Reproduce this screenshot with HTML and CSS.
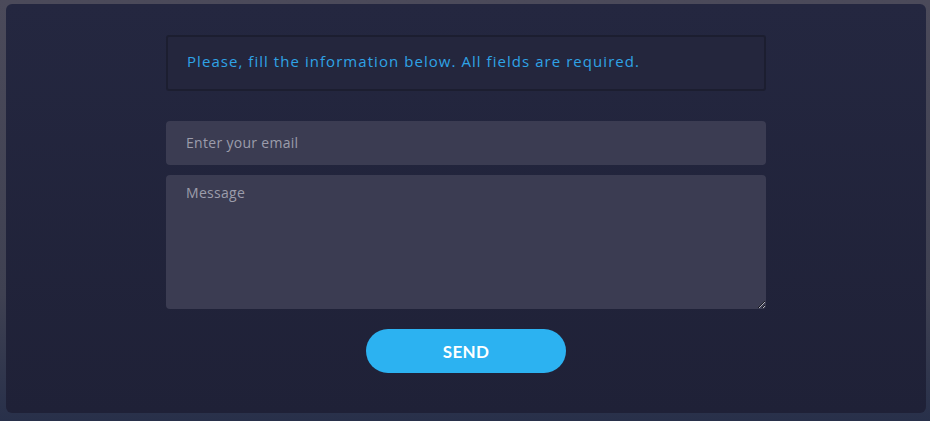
FILE: index.html
```html
<!DOCTYPE html>
<html>
<head>
<meta charset="utf-8">
<link rel="stylesheet" href="styles.css">
</head>
<body>
<div class="card">
  <form class="form">
    <div class="notice">Please, fill the information below. All fields are required.</div>
    <input class="field" type="text" placeholder="Enter your email">
    <textarea class="field area" placeholder="Message"></textarea>
    <button class="send" type="button">SEND</button>
  </form>
</div>
</body>
</html>
```
FILE: styles.css
```css
html, body {
  margin: 0;
  padding: 0;
  height: 421px;
  overflow: hidden;
}
body {
  background: linear-gradient(180deg, #4b4a5a 0%, #3f4152 70%, #28304a 100%);
  font-family: "Open Sans", "Lato", sans-serif;
  padding: 4px 4px 8px 6px;
  box-sizing: border-box;
}
.card {
  height: 409px;
  background: linear-gradient(180deg, #242740 0%, #1f2137 100%);
  border-radius: 6px;
  display: flex;
  justify-content: center;
  padding-top: 31px;
  box-sizing: border-box;
}
.form {
  width: 600px;
  display: flex;
  flex-direction: column;
  align-items: center;
}
.notice {
  box-sizing: border-box;
  width: 600px;
  height: 56px;
  border: 2px solid #1c1e30;
  border-radius: 3px;
  background: #24263d;
  color: #2fa3e6;
  font-size: 15px;
  letter-spacing: 1.05px;
  padding: 0 0 4px 19px;
  display: flex;
  align-items: center;
  margin-bottom: 30px;
}
.field {
  box-sizing: border-box;
  width: 600px;
  height: 44px;
  border: none;
  border-radius: 4px;
  background: #3b3c52;
  color: #d0d0da;
  font-family: inherit;
  font-size: 14px;
  letter-spacing: 0.3px;
  padding: 0 20px 2px;
  margin: 0 0 10px 0;
  outline: none;
}
.field::placeholder {
  color: #9c9cab;
}
.area {
  height: 134px;
  padding-top: 8px;
  resize: vertical;
  display: block;
}
.send {
  margin-top: 10px;
  width: 200px;
  height: 44px;
  border: none;
  border-radius: 22px;
  background: #2cb2f1;
  color: #ffffff;
  font-family: "Lato", sans-serif;
  font-weight: 700;
  font-size: 17px;
  letter-spacing: 0.3px;
}
```
